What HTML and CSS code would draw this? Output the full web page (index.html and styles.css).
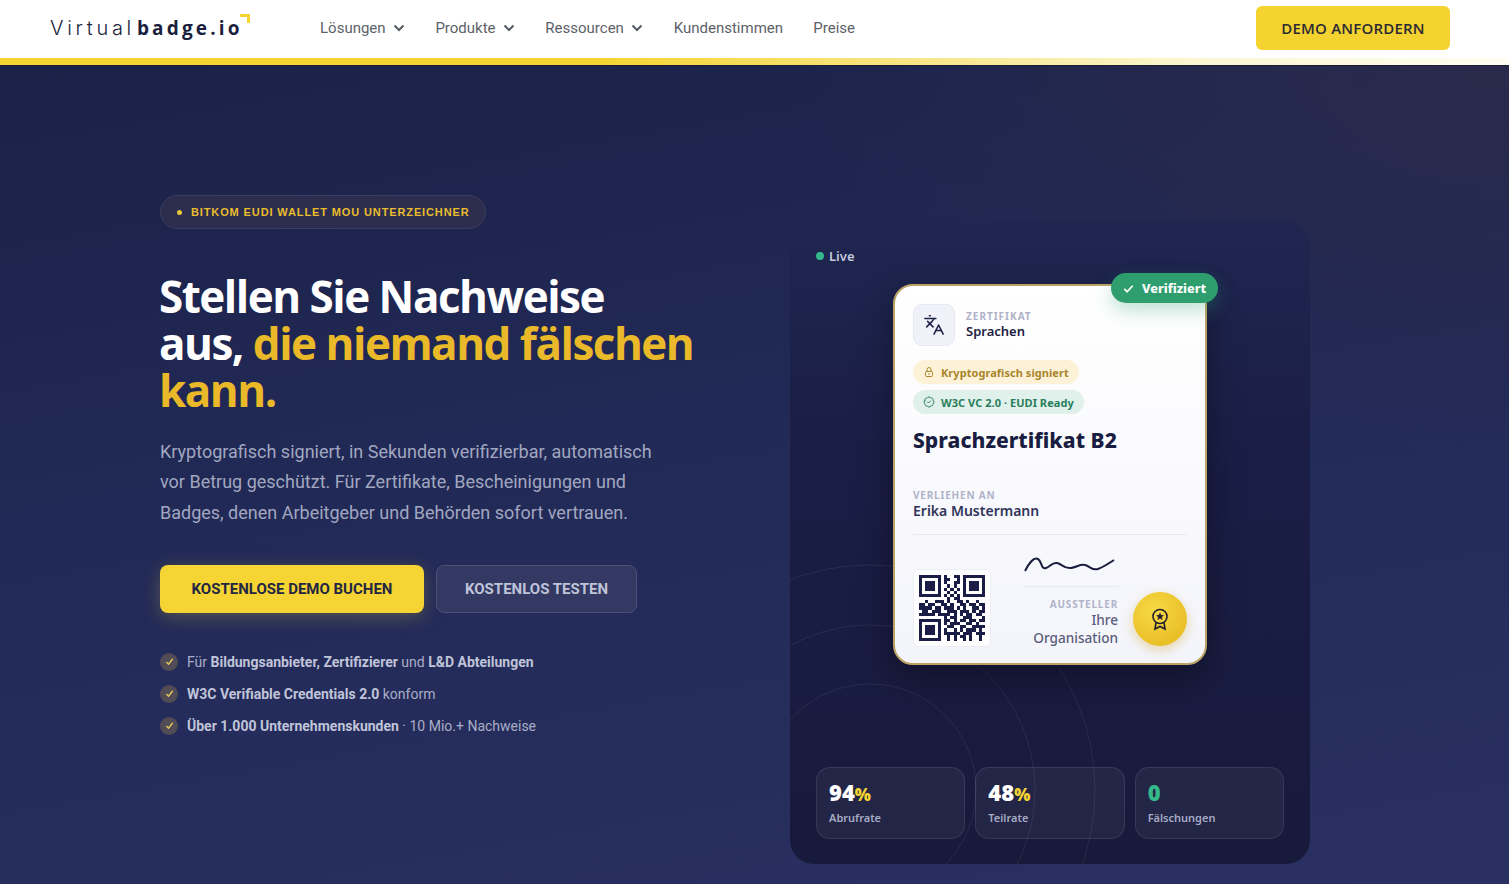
FILE: index.html
```html
<!DOCTYPE html>
<html lang="de">
<head>
<meta charset="utf-8">
<title>Virtualbadge.io</title>
<link rel="stylesheet" href="styles.css">
</head>
<body>
<header class="topbar">
  <a class="logo"><span class="logo-light">Virtual</span><span class="logo-bold">badge.io</span><span class="logo-corner"></span></a>
  <nav class="nav">
    <a class="nav-item">Lösungen <svg class="chev" viewBox="0 0 12 8"><path d="M1.5 1.5 6 6l4.5-4.5"/></svg></a>
    <a class="nav-item">Produkte <svg class="chev" viewBox="0 0 12 8"><path d="M1.5 1.5 6 6l4.5-4.5"/></svg></a>
    <a class="nav-item">Ressourcen <svg class="chev" viewBox="0 0 12 8"><path d="M1.5 1.5 6 6l4.5-4.5"/></svg></a>
    <a class="nav-item">Kundenstimmen</a>
    <a class="nav-item">Preise</a>
  </nav>
  <a class="cta-top">DEMO ANFORDERN</a>
</header>
<div class="rule"></div>
<main class="hero">
  <section class="copy">
    <div class="eyebrow"><i class="eyebrow-dot"></i>BITKOM EUDI WALLET MOU UNTERZEICHNER</div>
    <h1 class="headline">Stellen Sie Nachweise aus, <em>die niemand fälschen kann.</em></h1>
    <p class="lead">Kryptografisch signiert, in Sekunden verifizierbar, automatisch vor Betrug geschützt. Für Zertifikate, Bescheinigungen und Badges, denen Arbeitgeber und Behörden sofort vertrauen.</p>
    <div class="actions">
      <a class="btn btn-primary">KOSTENLOSE DEMO BUCHEN</a>
      <a class="btn btn-ghost">KOSTENLOS TESTEN</a>
    </div>
    <ul class="checks">
      <li><span class="tick"><svg viewBox="0 0 12 12"><path d="M2.5 6.5 5 9l4.5-6"/></svg></span><span>Für <b>Bildungsanbieter, Zertifizierer</b> und <b>L&amp;D Abteilungen</b></span></li>
      <li><span class="tick"><svg viewBox="0 0 12 12"><path d="M2.5 6.5 5 9l4.5-6"/></svg></span><span><b>W3C Verifiable Credentials 2.0</b> konform</span></li>
      <li><span class="tick"><svg viewBox="0 0 12 12"><path d="M2.5 6.5 5 9l4.5-6"/></svg></span><span><b>Über 1.000 Unternehmenskunden</b> · 10 Mio.+ Nachweise</span></li>
    </ul>
  </section>
  <section class="panel">
    <svg class="rings" viewBox="0 0 520 643"><circle cx="80" cy="569" r="106"/><circle cx="80" cy="569" r="165"/><circle cx="80" cy="569" r="225"/></svg>
    <div class="live"><i class="live-dot"></i>Live</div>
    <article class="cert">
      <div class="verified"><svg viewBox="0 0 14 14"><path d="M2.5 7.5 5.5 10.5 11.5 4"/></svg>Verifiziert</div>
      <div class="cert-head">
        <div class="cert-icon"><svg viewBox="0 0 24 24"><path d="m5 8 6 6"/><path d="m4 14 6-6 2-3"/><path d="M2 5h12"/><path d="M7 2h1"/><path d="m22 22-5-10-5 10"/><path d="M14 18h6"/></svg></div>
        <div><div class="cert-kicker">ZERTIFIKAT</div><div class="cert-type">Sprachen</div></div>
      </div>
      <div class="tags">
        <span class="tag tag-gold"><svg viewBox="0 0 24 24"><rect x="5" y="11" width="14" height="10" rx="2"/><path d="M8 11V7a4 4 0 0 1 8 0v4"/><path d="M12 15v2"/></svg>Kryptografisch signiert</span>
        <span class="tag tag-green"><svg viewBox="0 0 24 24"><path d="M3.85 8.62a4 4 0 0 1 4.78-4.77 4 4 0 0 1 6.74 0 4 4 0 0 1 4.78 4.78 4 4 0 0 1 0 6.74 4 4 0 0 1-4.77 4.78 4 4 0 0 1-6.75 0 4 4 0 0 1-4.78-4.77 4 4 0 0 1 0-6.76Z"/><path d="m9 12 2 2 4-4"/></svg>W3C VC 2.0 · EUDI Ready</span>
      </div>
      <h2 class="cert-title">Sprachzertifikat B2</h2>
      <div class="recipient">
        <div class="micro">VERLIEHEN AN</div>
        <div class="recipient-name">Erika Mustermann</div>
      </div>
      <div class="cert-foot">
        <div class="qr"><svg viewBox="0 0 21 21" shape-rendering="crispEdges"><path d="M0 .5h7M8 .5h1M11 .5h2M14 .5h7M0 1.5h1M6 1.5h1M8 1.5h2M12 1.5h1M14 1.5h1M20 1.5h1M0 2.5h1M2 2.5h3M6 2.5h1M8 2.5h1M11 2.5h2M14 2.5h1M16 2.5h3M20 2.5h1M0 3.5h1M2 3.5h3M6 3.5h1M9 3.5h1M11 3.5h1M14 3.5h1M16 3.5h3M20 3.5h1M0 4.5h1M2 4.5h3M6 4.5h1M8 4.5h1M10 4.5h1M12 4.5h1M14 4.5h1M16 4.5h3M20 4.5h1M0 5.5h1M6 5.5h1M9 5.5h1M11 5.5h1M14 5.5h1M20 5.5h1M0 6.5h7M8 6.5h1M10 6.5h1M12 6.5h1M14 6.5h7M9 7.5h1M11 7.5h2M2 8.5h1M5 8.5h3M9 8.5h1M12 8.5h2M15 8.5h1M18 8.5h1M0 9.5h2M3 9.5h2M7 9.5h2M10 9.5h1M13 9.5h2M16 9.5h2M19 9.5h2M0 10.5h4M5 10.5h2M8 10.5h3M12 10.5h1M14 10.5h1M17 10.5h2M20 10.5h1M1 11.5h2M4 11.5h3M9 11.5h3M13 11.5h3M17 11.5h1M19 11.5h2M0 12.5h5M6 12.5h4M11 12.5h1M13 12.5h1M15 12.5h2M18 12.5h2M8 13.5h1M10 13.5h2M14 13.5h3M20 13.5h1M0 14.5h7M8 14.5h2M11 14.5h1M13 14.5h2M16 14.5h2M19 14.5h2M0 15.5h1M6 15.5h1M8 15.5h1M10 15.5h3M15 15.5h2M18 15.5h1M0 16.5h1M2 16.5h3M6 16.5h1M9 16.5h2M13 16.5h2M17 16.5h4M0 17.5h1M2 17.5h3M6 17.5h1M8 17.5h1M11 17.5h1M13 17.5h1M15 17.5h3M19 17.5h1M0 18.5h1M2 18.5h3M6 18.5h1M8 18.5h5M14 18.5h3M18 18.5h3M0 19.5h1M6 19.5h1M9 19.5h1M11 19.5h1M13 19.5h2M16 19.5h1M19 19.5h1M0 20.5h7M9 20.5h1M11 20.5h1M14 20.5h1M16 20.5h1M19 20.5h1"/></svg></div>
        <div class="issuer">
          <svg class="signature" viewBox="0 0 92 16"><path d="M1 14C5 6 10 0 14 2c4 2 3 11 8 9 5-2 6-6 11-5 5 1 7 6 14 5 6-1 9-4 14-3 5 1 7 6 13 4 5-2 10-5 16-9"/></svg>
          <div class="issuer-meta">
            <div class="micro">AUSSTELLER</div>
            <div class="issuer-name">Ihre<br>Organisation</div>
          </div>
        </div>
        <div class="seal"><svg viewBox="0 0 24 24"><circle cx="12" cy="9.5" r="7"/><path d="m8 15.5-1 6.5 5-2.5 5 2.5-1-6.5"/><path class="star" d="m12 6 1 2.3 2.5.2-1.9 1.6.6 2.4-2.2-1.3-2.2 1.3.6-2.4-1.9-1.6 2.5-.2z"/></svg></div>
      </div>
    </article>
    <div class="stats">
      <div class="stat"><div class="stat-num">94<span>%</span></div><div class="stat-label">Abrufrate</div></div>
      <div class="stat"><div class="stat-num">48<span>%</span></div><div class="stat-label">Teilrate</div></div>
      <div class="stat"><div class="stat-num stat-num-green">0</div><div class="stat-label">Fälschungen</div></div>
    </div>
  </section>
</main>
</body>
</html>
```
FILE: styles.css
```css
* { box-sizing: border-box; }
html, body { margin: 0; height: 100%; }
body { width: 1509px; height: 884px; overflow: hidden; font-family: "Roboto", sans-serif; background: #1f2750; }
a { text-decoration: none; color: inherit; }

.topbar { height: 58px; background: #fff; display: flex; align-items: center; padding: 0 59px 2px 50px; }
.logo { position: relative; display: flex; align-items: baseline; width: 270px; color: #1a1f3d; white-space: nowrap; }
.logo-light { font-family: "Inter", sans-serif; font-weight: 300; font-size: 20px; letter-spacing: 3.7px; }
.logo-bold { font-family: "Open Sans", sans-serif; font-weight: 700; font-size: 19px; letter-spacing: 3.15px; margin-left: 2px; }
.logo-corner { position: absolute; left: 190px; top: -1px; width: 10px; height: 9px; border-top: 3px solid #f5d433; border-right: 3px solid #f5d433; }
.nav { display: flex; gap: 30.3px; flex: 1; color: #5c6168; font-size: 15px; }
.nav-item { display: flex; align-items: center; gap: 7.5px; }
.chev { width: 12px; height: 8px; fill: none; stroke: #555a62; stroke-width: 2; }
.cta-top { width: 194px; height: 44px; border-radius: 6px; background: #f4d22f; color: #2b2a33; display: flex; align-items: center; justify-content: center; font-family: "Open Sans", sans-serif; font-weight: 600; font-size: 15px; letter-spacing: .2px; }
.rule { height: 8px; background: linear-gradient(90deg, #f5d433 0%, #f5d433 40%, #fbf7d4 80%, #fffdf0 100%) content-box; border-bottom: 1px solid #191c33; }

.hero { height: 818px; display: flex; padding: 155px 0 0 160px; gap: 97px; background: radial-gradient(700px 400px at 100% 0, #2a2a4c 0, rgba(42,42,76,0) 100%), linear-gradient(170deg, #1a2248 0%, #222a58 50%, #2a3162 100%); }

.copy { width: 533px; flex: none; margin-top: -26px; }
.eyebrow { width: 326px; display: flex; align-items: center; gap: 9px; height: 34px; padding: 0 10px 0 16px; border-radius: 17px; background: #2c2d4f; border: 1px solid #3c3d5c; color: #e9bd2d; font-family: "Liberation Sans", sans-serif; font-weight: 700; font-size: 11px; letter-spacing: .88px; white-space: nowrap; }
.eyebrow-dot { flex: none; width: 5px; height: 5px; border-radius: 50%; background: #e9c532; }
.headline { margin: 44px 0 0 -1px; width: 536px; font-family: "Open Sans", sans-serif; font-weight: 700; font-size: 44px; line-height: 47px; letter-spacing: -1.5px; color: #fff; }
.headline em { font-style: normal; color: #e9b92a; }
.lead { margin: 22.75px 0 0; width: 500px; font-size: 18px; line-height: 30.5px; color: #a2a7c0; }
.actions { display: flex; gap: 12px; margin-top: 36.25px; }
.btn { height: 48px; border-radius: 8px; display: flex; align-items: center; justify-content: center; font-weight: 700; font-size: 15px; }
.btn-primary { width: 264px; background: #f5d433; color: #232642; box-shadow: 0 4px 18px rgba(245,212,51,.25); }
.btn-ghost { width: 201px; background: #333963; border: 1px solid #4a5079; color: #bfc3d8; }
.checks { list-style: none; margin: 39px 0 0; padding: 0; display: flex; flex-direction: column; gap: 12px; font-size: 14px; line-height: 20px; color: #a9aec7; }
.checks li { display: flex; align-items: center; gap: 9px; }
.checks b { font-weight: 700; color: #c0c4d9; }
.tick { width: 18px; height: 18px; border-radius: 50%; background: #504b55; display: flex; align-items: center; justify-content: center; }
.tick svg { width: 11px; height: 11px; fill: none; stroke: #e3c35a; stroke-width: 1.6; }

.panel { position: relative; width: 520px; height: 643px; flex: none; overflow: hidden; border-radius: 24px; background: linear-gradient(180deg, #1f2650 0%, #1a1d45 40%, #181a3c 100%); padding: 26px 26px 25px; display: flex; flex-direction: column; }
.rings { position: absolute; inset: 0; width: 100%; height: 100%; fill: none; stroke: rgba(255,255,255,.07); stroke-width: 1; }
.live { position: relative; display: flex; align-items: center; gap: 5px; height: 18px; font-family: "Noto Sans", sans-serif; font-weight: 600; font-size: 13px; color: #c4c8dd; }
.live-dot { width: 8px; height: 8px; border-radius: 50%; background: #34b98a; }

.cert { position: relative; align-self: center; margin-top: 19px; width: 314px; height: 381px; border-radius: 20px; border: 2px solid #bba366; background: linear-gradient(180deg, #fff 0%, #f4f5fb 100%); box-shadow: 0 14px 36px rgba(0,0,0,.35); padding: 18px 18px 0; font-family: "Noto Sans", sans-serif; }
.verified { position: absolute; right: -13px; top: -13px; height: 30px; width: 107px; border-radius: 15px; background: #2f9e6f; box-shadow: 0 8px 18px rgba(47,158,111,.3); color: #fff; display: flex; align-items: center; gap: 7px; padding-left: 11px; font-weight: 800; font-size: 12.7px; }
.verified svg { width: 13px; height: 13px; fill: none; stroke: #fff; stroke-width: 1.8; }
.cert-head { display: flex; align-items: center; gap: 11px; }
.cert-icon { width: 42px; height: 42px; border-radius: 9px; background: #f1f2f9; border: 1px solid #e6e8f2; display: flex; align-items: center; justify-content: center; }
.cert-icon svg { width: 22px; height: 22px; fill: none; stroke: #1d2145; stroke-width: 1.7; stroke-linecap: round; stroke-linejoin: round; }
.cert-kicker { font-weight: 700; font-size: 10px; letter-spacing: 1px; line-height: 12px; color: #aeb1c7; }
.cert-type { font-weight: 600; font-size: 13px; line-height: 18px; color: #1d2145; }
.tags { display: flex; flex-direction: column; align-items: flex-start; gap: 6px; margin-top: 14px; }
.tag { height: 24px; border-radius: 12px; display: inline-flex; align-items: center; gap: 6px; padding: 0 10px; font-weight: 700; font-size: 11px; letter-spacing: .05px; white-space: nowrap; }
.tag svg { width: 12px; height: 12px; fill: none; stroke: currentColor; stroke-width: 2; stroke-linecap: round; stroke-linejoin: round; }
.tag-gold { background: #fdf1d8; color: #a8862a; }
.tag-green { background: #dff1ea; color: #2a7d5c; }
.cert-title { margin: 12px 0 0; font-weight: 800; font-size: 21px; line-height: 28px; letter-spacing: .05px; color: #1a1d42; }
.recipient { margin-top: 35px; padding-bottom: 15px; border-bottom: 1px solid #e6e7f0; }
.micro { font-weight: 700; font-size: 10px; letter-spacing: .8px; line-height: 13px; color: #b0b3c9; }
.recipient-name { font-weight: 600; font-size: 14px; line-height: 17px; color: #31345a; }
.cert-foot { display: flex; align-items: flex-end; margin-top: 22px; }
.qr { width: 78px; height: 78px; flex: none; background: #fff; border: 1px solid #eceef5; border-radius: 6px; padding: 5px; }
.qr svg { display: block; width: 66px; height: 66px; stroke: #1a1d45; stroke-width: 1; fill: none; }
.issuer { width: 95px; margin-left: auto; display: flex; flex-direction: column; align-items: flex-end; }
.signature { width: 92px; height: 16px; margin-right: 3px; fill: none; stroke: #1a1d3f; stroke-width: 2; }
.issuer-meta { width: 100%; margin-top: 13px; padding-top: 11px; border-top: 1px solid #e8e9f1; text-align: right; padding-right: 1px; }
.issuer-name { font-weight: 500; font-size: 13.6px; line-height: 18px; color: #5a5d7c; }
.seal { width: 54px; height: 54px; flex: none; margin: 0 0 1px 14px; border-radius: 50%; background: radial-gradient(circle at 40% 35%, #f7da47, #e6b81f 90%); box-shadow: 0 4px 12px rgba(200,150,20,.35); display: flex; align-items: center; justify-content: center; }
.seal svg { width: 24px; height: 24px; fill: none; stroke: #1e1c2a; stroke-width: 1.6; }
.seal .star { fill: #1e1c2a; stroke-width: .5; }

.stats { position: relative; margin-top: auto; display: flex; gap: 10px; }
.stat { flex: 1; height: 72px; border-radius: 14px; background: rgba(255,255,255,.05); border: 1px solid rgba(255,255,255,.09); padding: 10px 12px; font-family: "Noto Sans", sans-serif; }
.stat-num { font-weight: 900; font-size: 22px; line-height: 28px; color: #fff; }
.stat-num span { font-size: 17px; line-height: 1; color: #f5d433; }
.stat-num-green { color: #34b98a; }
.stat-label { margin-top: 4px; font-weight: 600; font-size: 11px; line-height: 16px; color: #a6aac4; }
```
